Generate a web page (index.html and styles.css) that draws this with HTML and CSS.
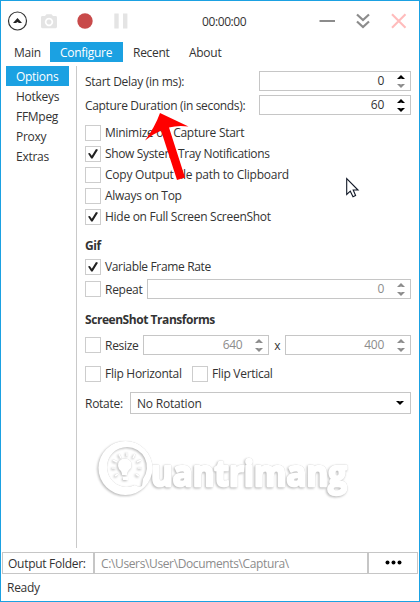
FILE: index.html
```html
<!DOCTYPE html>
<html lang="en">
<head>
<meta charset="utf-8">
<title>Captura</title>
<link rel="stylesheet" href="styles.css">
</head>
<body>
<svg class="defs" width="0" height="0">
  <symbol id="up" viewBox="0 0 8 4"><path d="M4 0 8 4H5.2L4 3.4 2.8 4H0Z"/></symbol>
  <symbol id="down" viewBox="0 0 8 4"><path d="M4 4 0 0H2.8L4 .6 5.2 0H8Z"/></symbol>
</svg>
<div class="window">
  <header class="toolbar">
    <svg class="icons" width="140" height="40" viewBox="0 0 140 40">
      <circle cx="16.5" cy="20" r="9" fill="#fff" stroke="#333" stroke-width="1.2"/>
      <path d="M16.5 17 21 21.9H18L16.5 21 15 21.9H12Z" fill="#222"/>
      <path fill="#e4e4e4" fill-rule="evenodd" d="M45.5 13.2h5l1.5 1.8h2.6q1.4 0 1.4 1.4v9.4q0 1.4-1.4 1.4H41.400q-1.400 0-1.400-1.400v-9.400q0-1.400 1.400-1.400H44ZM48 16.800a4.200 4.200 0 1 0 .01 0ZM48 18.500a2.500 2.500 0 1 1-.01 0Z"/>
      <circle cx="84" cy="20" r="7.700" fill="#c84a4a"/>
      <path d="M113.300 12.500h4.400v15h-4.400ZM122 12.500h4.400v15H122Z" fill="#e4e4e4"/>
    </svg>
    <span class="timer">00:00:00</span>
    <svg class="controls" width="92" height="18" viewBox="0 0 92 18" fill="none">
      <path d="M.5 9H16" stroke="#8c8c8c" stroke-width="2"/>
      <path d="M38 2.500 44 8l6-5.500M38 9.500 44 15l6-5.500" stroke="#8c8c8c" stroke-width="2.200"/>
      <path d="m73 2.300 13.500 13.500m0-13.500L73 15.800" stroke="#ffbcbc" stroke-width="2.100"/>
    </svg>
  </header>
  <nav class="tabs"><a class="t-main">Main</a><a class="active">Configure</a><a class="t-recent">Recent</a><a class="t-about">About</a></nav>
  <div class="body">
    <aside class="side"><a class="active">Options</a><a>Hotkeys</a><a>FFMpeg</a><a>Proxy</a><a>Extras</a></aside>
    <main class="content">
      <div class="field"><span>Start Delay (in ms):</span><div class="num w152">0<svg class="spin"><use href="#up" width="8" height="4"/><use class="dim" href="#down" y="9" width="8" height="4"/></svg></div></div>
      <div class="field second"><span class="duration">Capture Duration (in seconds):</span><div class="num w152">60<svg class="spin"><use href="#up" width="8" height="4"/><use href="#down" y="9" width="8" height="4"/></svg></div></div>
      <div class="checks">
        <div class="check"><i></i><span>Minimize on Capture Start</span></div>
        <div class="check"><i class="on"></i><span class="tray">Show System Tray Notifications</span></div>
        <div class="check"><i></i><span class="copy">Copy Output file path to Clipboard</span></div>
        <div class="check"><i></i><span>Always on Top</span></div>
        <div class="check"><i class="on"></i><span>Hide on Full Screen ScreenShot</span></div>
      </div>
      <h2>Gif</h2>
      <div class="check"><i class="on"></i><span class="tray">Variable Frame Rate</span></div>
      <div class="row repeat"><div class="check"><i></i><span>Repeat</span></div><div class="num off w264">0<svg class="spin"><use href="#up" width="8" height="4"/><use href="#down" y="9" width="8" height="4"/></svg></div></div>
      <h2 class="transforms">ScreenShot Transforms</h2>
      <div class="row resize"><div class="check"><i></i><span>Resize</span></div><div class="num off w126">640<svg class="spin"><use href="#up" width="8" height="4"/><use href="#down" y="9" width="8" height="4"/></svg></div><span class="by">x</span><div class="num off w126">400<svg class="spin"><use href="#up" width="8" height="4"/><use href="#down" y="9" width="8" height="4"/></svg></div></div>
      <div class="row flips"><div class="check horizontal"><i></i><span>Flip Horizontal</span></div><div class="check"><i></i><span>Flip Vertical</span></div></div>
      <div class="row rotate"><span class="label">Rotate:</span><div class="select"><span>No Rotation</span><svg width="8" height="4"><use href="#down" width="8" height="4"/></svg></div></div>
    </main>
  </div>
  <div class="output"><div class="folder">Output Folder:</div><div class="path">C:\Users\User\Documents\Captura\</div><div class="more"><svg width="17" height="5"><circle cx="2.500" cy="2.500" r="2"/><circle cx="8.500" cy="2.500" r="2"/><circle cx="14.500" cy="2.500" r="2"/></svg></div></div>
  <footer>Ready</footer>
</div>
<svg class="overlay" width="420" height="602" viewBox="0 0 420 602">
  <g class="mark">
    <path fill="#fff" fill-rule="evenodd" d="M125.500 441a27 27 0 1 0 0 54 27 27 0 0 0 0-54ZM127 447a20 20 0 0 1 16 32l-1 7q-3 2-7-1-4 2-8 2a20 20 0 0 1 0-40Z"/>
    <path fill="#fff" d="M122 475q0-4-3-6-3-7 3-10 6-2 9 3 2 5-2 8-2 2-2 5ZM123 477h5v3h-5Z"/>
    <path fill="none" stroke="#fff" stroke-width="1.600" d="m127 452 0 4M119 454l2 4M135 454l-2 4M113 460l4 2M141 460l-4 2M112 468h4M138 468h4M115 476l3-2M139 476l-3-2"/>
    <text x="151" y="486" textLength="196" lengthAdjust="spacingAndGlyphs">uantrimang</text>
  </g>
  <path fill="red" d="M160 113 188.500 126.500Q178 125 169 127.500L185 177.500 177 180 161 130.500Q153 134 145 140.500Q155 127 160 113Z"/>
  <path fill="#fff" stroke="#111827" stroke-width="1.100" d="M346.700 178.700V194.500L350.300 191.200 353 196.700 355.600 195.500 353.200 190H358Z"/>
</svg>
</body>
</html>
```
FILE: styles.css
```css
* { box-sizing: border-box; }
body { margin: 0; width: 420px; height: 602px; overflow: hidden; background: #fff; color: #333; font: 12px/20px "Open Sans", "Noto Sans", sans-serif; letter-spacing: -.28px; }
svg { display: block; }
.defs { position: absolute; }
.window { width: 420px; height: 602px; border: 1px solid #1ba1e2; display: flex; flex-direction: column; }
.window > * { flex: none; }
.toolbar { height: 41px; display: flex; align-items: flex-start; }
.timer { margin: 11px 0 0 61px; width: 46px; letter-spacing: -.4px; white-space: nowrap; }
.controls { margin: 11px 0 0 71px; }
.tabs { height: 24px; display: flex; white-space: nowrap; line-height: 22px; }
.tabs a { height: 20px; padding-left: 10px; }
.tabs .t-main { width: 49px; padding-left: 13px; }
.tabs .active { width: 73px; }
.t-recent { width: 56px; }
.active { background: #1ba1e2; color: #fff; }
.body { height: 482px; display: flex; }
.side { width: 76px; padding: 0 7px 0 5px; border-right: 1px solid #c9c9c9; line-height: 22px; }
.side a { display: block; height: 20px; padding-left: 10px; }
.content { width: 342px; padding: 5px 8px 0; white-space: nowrap; }
.field { display: flex; justify-content: space-between; height: 20px; line-height: 22px; }
.duration { letter-spacing: -.33px; }
.tray { letter-spacing: -.35px; }
.copy { letter-spacing: -.24px; }
.second { margin-top: 4px; }
.num { height: 20px; border: 1px solid #c6c6c6; display: flex; align-items: center; justify-content: flex-end; padding-right: 5px; gap: 13px; line-height: 20px; }
.spin { width: 8px; height: 13px; }
.off { color: #8c8c8c; }
.off .spin, .dim { fill: #8c8c8c; }
.w152 { width: 152px; }
.w264 { width: 264px; }
.w126 { width: 126px; }
.checks { margin-top: 10px; display: grid; gap: 5px; }
.check { height: 16px; display: flex; align-items: center; gap: 4px; line-height: 16px; }
.check i { width: 16px; height: 16px; border: 1px solid #cdcdcd; flex: none; }
.on::after { content: ""; display: block; width: 10px; height: 10px; margin: 2px 0 0 2px; background: #222; clip-path: polygon(0 45%, 18% 40%, 38% 67%, 80% 0, 100% 7%, 46% 96%, 32% 96%); }
h2 { margin: 11px 0 3px; font-size: 12px; line-height: 20px; font-weight: 700; letter-spacing: -.45px; }
.row { display: flex; align-items: center; }
.repeat { margin-top: 4px; justify-content: space-between; }
.repeat span, .resize .check span { padding-top: 2px; }
.transforms { margin: 11px 0 5px; }
.resize { height: 20px; justify-content: space-between; }
.by { height: 20px; line-height: 22px; }
.flips { margin-top: 11px; }
.horizontal { width: 107px; }
.rotate { margin-top: 10px; justify-content: space-between; }
.rotate .label { height: 20px; line-height: 22px; }
.select span { height: 20px; line-height: 22px; letter-spacing: -.2px; }
.select { width: 281px; height: 22px; border: 1px solid #c6c6c6; display: flex; align-items: center; justify-content: space-between; padding: 0 6px; }
.output { height: 22px; margin: 4px 1px 0; display: flex; line-height: 21px; }
.output > div { border: 1px solid #c6c6c6; padding-left: 5px; }
.folder { width: 92px; }
.output .path { width: 274px; padding-left: 6px; color: #8c8c8c; letter-spacing: -.37px; }
.output .more { width: 50px; padding: 7px 0 0 16px; }
footer { padding: 4px 6px 0; }
.overlay { position: absolute; inset: 0; pointer-events: none; }
.mark { filter: drop-shadow(0 0 .5px #ccc) drop-shadow(-.5px 1px .9px #bbb); }
.mark text { font: 700 36px "Open Sans", sans-serif; letter-spacing: 0; fill: #fff; stroke: #fff; stroke-width: 2.500px; stroke-linejoin: round; }
```
